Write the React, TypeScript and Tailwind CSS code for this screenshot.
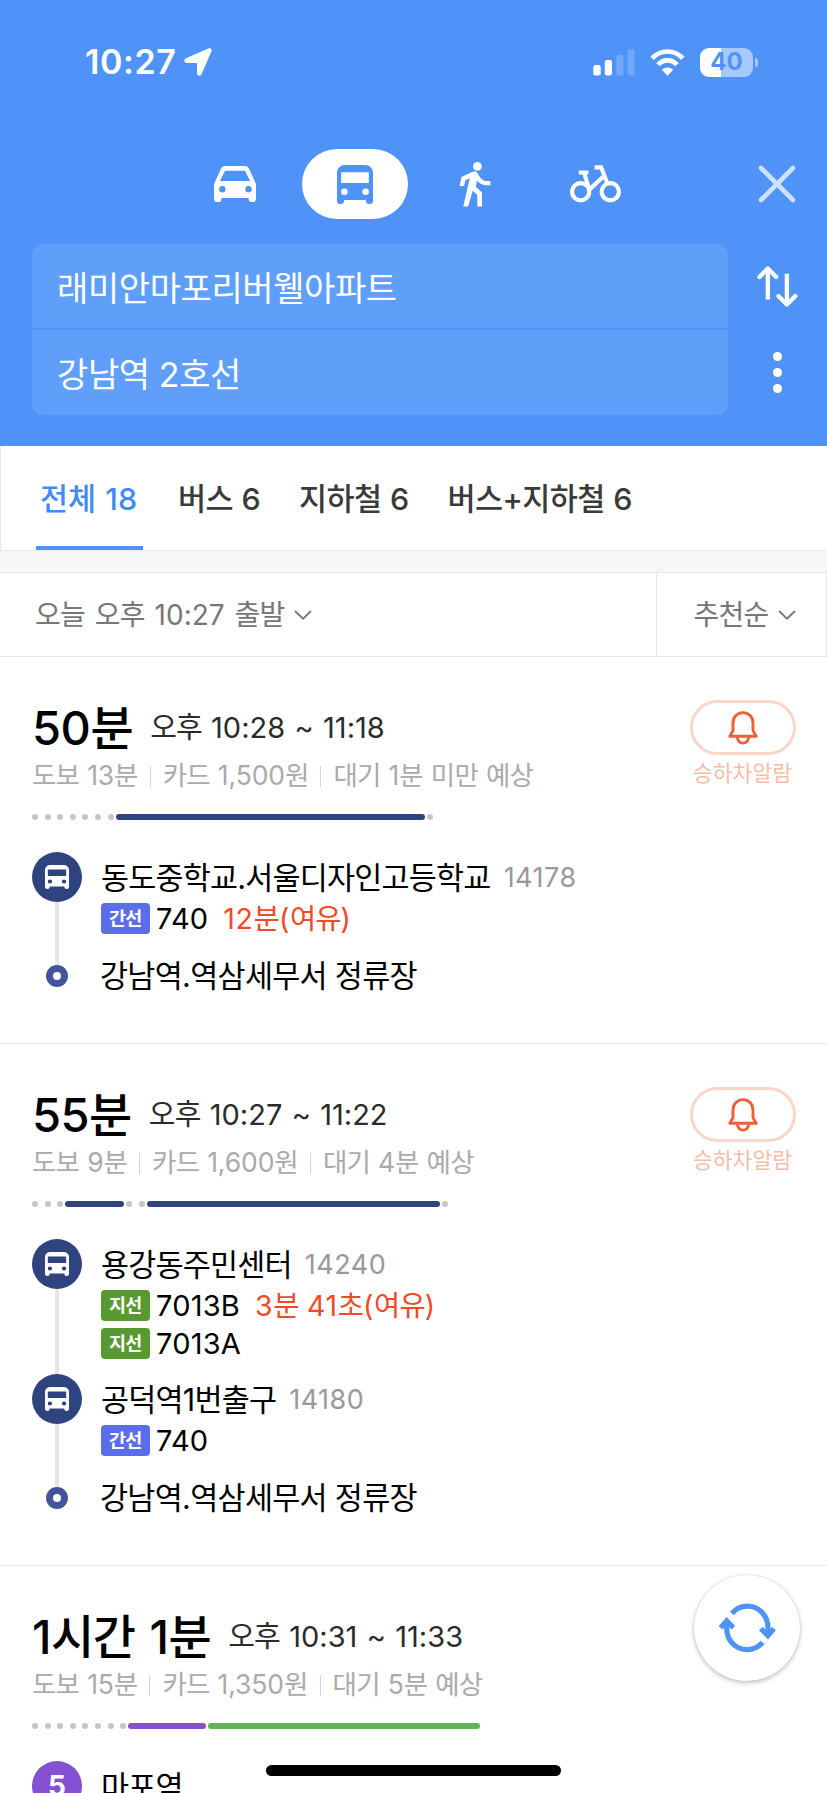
import clsx from "clsx";

type Tag = "간선" | "지선";

type BusLine = { tag: Tag; number: string; arrival?: string };

type Stop = {
    name: string;
    code?: string;
    subway?: string;
    lines: BusLine[];
};

// number = count of walking dots, object = ride segment
type Segment = number | { width: number; color: string };

type Route = {
    duration: string;
    time: string;
    meta: string[];
    segments: Segment[];
    stops: Stop[];
    goal?: string;
    alarm: boolean;
};

const NAVY = "bg-[#2f437f]";

const routes: Route[] = [
    {
        duration: "50분",
        time: "오후 10:28 ~ 11:18",
        meta: ["도보 13분", "카드 1,500원", "대기 1분 미만 예상"],
        segments: [7, { width: 309, color: NAVY }, 1],
        stops: [
            {
                name: "동도중학교.서울디자인고등학교",
                code: "14178",
                lines: [{ tag: "간선", number: "740", arrival: "12분(여유)" }],
            },
        ],
        goal: "강남역.역삼세무서 정류장",
        alarm: true,
    },
    {
        duration: "55분",
        time: "오후 10:27 ~ 11:22",
        meta: ["도보 9분", "카드 1,600원", "대기 4분 예상"],
        segments: [3, { width: 59, color: NAVY }, 2, { width: 293, color: NAVY }, 1],
        stops: [
            {
                name: "용강동주민센터",
                code: "14240",
                lines: [
                    { tag: "지선", number: "7013B", arrival: "3분 41초(여유)" },
                    { tag: "지선", number: "7013A" },
                ],
            },
            {
                name: "공덕역1번출구",
                code: "14180",
                lines: [{ tag: "간선", number: "740" }],
            },
        ],
        goal: "강남역.역삼세무서 정류장",
        alarm: true,
    },
    {
        duration: "1시간 1분",
        time: "오후 10:31 ~ 11:33",
        meta: ["도보 15분", "카드 1,350원", "대기 5분 예상"],
        segments: [8, { width: 78, color: "bg-[#8650d3]" }, { width: 272, color: "bg-[#60b157]" }],
        stops: [{ name: "마포역", subway: "5", lines: [] }],
        alarm: false,
    },
];

const tabs = [
    { label: "전체 18", active: true },
    { label: "버스 6", active: false },
    { label: "지하철 6", active: false },
    { label: "버스+지하철 6", active: false },
];

// Hangul is set tighter than digits, so the latin runs get their own tracking
function Mixed({ text, latin = "tracking-[0px]" }: { text: string; latin?: string }) {
    return (
        <span className="whitespace-pre">
            {text.split(/([\x20-\x7e]+)/).map((part, i) =>
                i % 2 ? (
                    <span key={i} className={latin}>
                        {part}
                    </span>
                ) : (
                    part
                ),
            )}
        </span>
    );
}

function BusIcon({ className }: { className?: string }) {
    return (
        <svg viewBox="0 0 36 39" preserveAspectRatio="none" className={className} fill="currentColor">
            <path
                fillRule="evenodd"
                d="M8 0H28C32.5 0 36 3.5 36 8V35.7A3.3 3.3 0 0 1 32.7 39H32.3A3.3 3.3 0 0 1 29 35.7V35H7V35.7A3.3 3.3 0 0 1 3.7 39H3.3A3.3 3.3 0 0 1 0 35.7V8C0 3.5 3.5 0 8 0ZM4.2 7.3V18H31.8V7.3ZM7.4 23.4A3.3 3.3 0 1 0 7.4 30 3.3 3.3 0 1 0 7.4 23.4ZM28.6 23.4A3.3 3.3 0 1 0 28.6 30 3.3 3.3 0 1 0 28.6 23.4Z"
            />
        </svg>
    );
}

function StatusBar() {
    return (
        <div className="flex h-[124px] items-center pl-[85px] pr-[69px] text-white">
            <span className="text-[34px] font-semibold leading-none tracking-[0.6px]">10:27</span>
            <svg className="ml-[8px] h-[28px] w-[28px]" viewBox="0 0 28 28" fill="currentColor">
                <path d="M24.3.5C26.8-.5 28.4 1.2 27.4 3.6L17.6 26C16.5 28.6 13 28 13 25.2V15.8C13 15.1 12.8 14.9 12.1 14.9H2.7C-.1 14.9-.6 11.3 2 10.2Z" />
            </svg>
            <svg className="ml-auto h-[27px] w-[42px]" viewBox="0 0 42 27" fill="currentColor">
                <rect x="0.3" y="16" width="7.4" height="10.5" rx="2.2" />
                <rect x="11.8" y="11" width="7.2" height="15.5" rx="2.2" />
                <rect x="23.2" y="5.8" width="7.2" height="20.7" rx="2.2" opacity="0.2" />
                <rect x="34.5" y="0.3" width="7" height="26.2" rx="2.2" opacity="0.2" />
            </svg>
            <svg className="ml-[15px] h-[27px] w-[35px]" viewBox="0 0 35 27" fill="none" stroke="currentColor" strokeWidth="4.7">
                <path d="M2.2 9.4A20.4 20.4 0 0 1 32.8 9.4" />
                <path d="M8 15.8A12.4 12.4 0 0 1 27 15.8" />
                <path d="M17.5 26.7 11.8 20.8A8.3 8.3 0 0 1 23.2 20.8Z" fill="currentColor" stroke="none" />
            </svg>
            <div className="ml-[15px] flex h-[29px] w-[53px] items-center justify-center rounded-[9px] bg-[linear-gradient(90deg,#fff_0_21px,#a6c9fb_21px)]">
                <span className="text-[24px] font-bold leading-none text-[#4f93f8]">40</span>
            </div>
            <div className="ml-[2px] h-[9px] w-[3px] rounded-r-full bg-[#a6c9fb]" />
        </div>
    );
}

function TransportBar() {
    return (
        <div className="mt-[25px] flex h-[70px] items-center pl-[175px] pr-[31px] text-white">
            <div className="flex w-[120px] justify-center">
                <svg className="h-[36px] w-[42px]" viewBox="0 0 42 36" fill="currentColor">
                    <path
                        fillRule="evenodd"
                        d="M11.2 0H30.8C32.8 0 34.2 1 35 2.8L41.3 16.4C41.8 17.4 42 18 42 19V32.4A3.6 3.6 0 0 1 38.4 36H38.1A3.6 3.6 0 0 1 34.5 32.4V32H7.5V32.4A3.6 3.6 0 0 1 3.9 36H3.6A3.6 3.6 0 0 1 0 32.4V19C0 18 .2 17.4.7 16.4L7 2.8C7.8 1 9.2 0 11.2 0ZM11 4.8 6 15.1H36L31 4.8ZM8.3 20.1A3.2 3.2 0 1 0 8.3 26.5 3.2 3.2 0 1 0 8.3 20.1ZM34.5 20.1A3.2 3.2 0 1 0 34.5 26.5 3.2 3.2 0 1 0 34.5 20.1Z"
                    />
                </svg>
            </div>
            <div className="flex w-[120px] justify-center">
                <div className="flex h-[70px] w-[106px] items-center justify-center rounded-full bg-white">
                    <BusIcon className="h-[39px] w-[36px] text-[#4f93f8]" />
                </div>
            </div>
            <div className="flex w-[120px] justify-center">
                <svg className="h-[45px] w-[32px]" viewBox="0 0 32 45" fill="currentColor">
                    <circle cx="18.4" cy="4.4" r="4.4" />
                    <path d="M.5 24 2.5 15 12.5 10.2C15 9 17.4 9.3 18.6 11.3L20 13.7C22 17 24.6 19.1 27.5 19.1H31.4V23.2H26.5C23.2 23.2 20 21.3 17.8 18.6L16.8 24.8 23 30.5V44.5H18.3V33L13.6 28.8 9.2 44.5H4.3L10.7 16.2 6.4 18.2 5 24Z" />
                </svg>
            </div>
            <div className="flex w-[120px] justify-center">
                <svg className="h-[38px] w-[51px]" viewBox="0 0 51 38" fill="none" stroke="currentColor" strokeWidth="4.1">
                    <circle cx="10.7" cy="26.7" r="8.6" />
                    <circle cx="40.3" cy="26.7" r="8.6" />
                    <path d="M8.8 7.5H18.4M14 7.5 19.4 24.5 33.5 11.5M24.5 2.4H31.2L37.6 19" />
                </svg>
            </div>
            <svg className="ml-auto h-[38px] w-[38px]" viewBox="0 0 38 38" fill="none" stroke="currentColor" strokeWidth="4.6" strokeLinecap="round" opacity="0.72">
                <path d="M3 3 35 35M35 3 3 35" />
            </svg>
        </div>
    );
}

function SearchBox() {
    return (
        <div className="mt-[25px] flex pl-[32px]">
            <div className="flex w-[696px] flex-col gap-[2px] overflow-hidden rounded-[11px] text-[34px] leading-[40px] tracking-[-0.4px] text-white">
                <div className="flex h-[84px] items-center bg-[#5f9ef9] pl-[25px] pt-[5px]">래미안마포리버웰아파트</div>
                <div className="flex h-[85px] items-center bg-[#5f9ef9] pl-[25px] pt-[5px]">강남역 2호선</div>
            </div>
            <div className="flex flex-1 flex-col items-center pt-[22px] text-white">
                <svg className="h-[41px] w-[41px]" viewBox="0 0 41 41" fill="none" stroke="currentColor" strokeWidth="4.3">
                    <path d="M10.8 33.5V3.5M29.9 7.7V37.5" />
                    <path d="M2.4 11 10.8 2.6 19.2 11M21.5 30 29.9 38.4 38.3 30" strokeLinecap="round" strokeLinejoin="round" />
                </svg>
                <div className="mt-[45px] flex flex-col gap-[7px]">
                    <span className="size-[9px] rounded-full bg-white" />
                    <span className="size-[9px] rounded-full bg-white" />
                    <span className="size-[9px] rounded-full bg-white" />
                </div>
            </div>
        </div>
    );
}

function Chevron() {
    return (
        <svg className="h-[10px] w-[18px]" viewBox="0 0 18 10" fill="none" stroke="#777" strokeWidth="1.8">
            <path d="M1 1 9 8.7 17 1" />
        </svg>
    );
}

function RouteBar({ segments }: { segments: Segment[] }) {
    return (
        <div className="mt-[17px] flex h-[6px] gap-[2px]">
            {segments.map((seg, i) =>
                typeof seg === "number" ? (
                    <div key={i} className="flex gap-[6.6px]">
                        {Array.from({ length: seg }, (_, d) => (
                            <span key={d} className="size-[6px] rounded-full bg-[#c6c6c6]" />
                        ))}
                    </div>
                ) : (
                    <div key={i} className={clsx("h-[6px] rounded-full", seg.color)} style={{ width: seg.width }} />
                ),
            )}
        </div>
    );
}

function StopRow({ stop }: { stop: Stop }) {
    return (
        <div className="flex min-h-[113px]">
            <div className="flex w-[50px] flex-col items-center">
                {stop.subway ? (
                    <div className="flex size-[50px] shrink-0 items-center justify-center rounded-full bg-[#8650d3] text-[28px] font-bold text-white">
                        {stop.subway}
                    </div>
                ) : (
                    <div className="flex size-[50px] shrink-0 items-center justify-center rounded-full bg-[#2f437f]">
                        <BusIcon className="h-[24px] w-[24px] text-white" />
                    </div>
                )}
                <div className="w-[4px] flex-1 bg-[#e6e6e6]" />
            </div>
            <div className="pb-[15px] pl-[19px]">
                <div className="flex h-[51px] items-center pt-px">
                    <span className="text-[30.5px] tracking-[-0.8px] text-black">{stop.name}</span>
                    {stop.code && <span className="ml-[13px] text-[27px] tracking-[0.5px] text-[#999]">{stop.code}</span>}
                </div>
                <div className="flex flex-col gap-[7px]">
                    {stop.lines.map((line) => (
                        <div key={line.number} className="flex h-[31px] items-center">
                            <span
                                className={clsx(
                                    "flex h-[31px] w-[48.5px] items-center justify-center rounded-[4px] text-[18.5px] font-bold leading-none tracking-[-0.8px] text-white",
                                    line.tag === "간선" ? "bg-[#5b6eea]" : "bg-[#589a31]",
                                )}
                            >
                                {line.tag}
                            </span>
                            <span className="ml-[6.5px] pt-px text-[29px] tracking-[0.2px] text-black">{line.number}</span>
                            {line.arrival && (
                                <span className="ml-[15px] pt-px text-[28.5px] tracking-[-0.9px] text-[#f04a29]">
                                    <Mixed text={line.arrival} latin="tracking-[0.6px]" />
                                </span>
                            )}
                        </div>
                    ))}
                </div>
            </div>
        </div>
    );
}

function RouteCard({ route }: { route: Route }) {
    return (
        <section className="border-b border-[#ececec] pb-[56px] pl-[32px] pr-[31px]">
            <div className="flex justify-between">
                <div className="pt-[44px]">
                    <div className="flex h-[52px] items-center pt-[2px]">
                        <span className="text-[47px] font-medium tracking-[-1.5px] text-black [word-spacing:3px]">
                            <Mixed text={route.duration} latin="tracking-[-0.5px]" />
                        </span>
                        <span className="ml-[18px] text-[29px] tracking-[-0.9px] text-[#2b2b2b] [word-spacing:1.2px]">
                            <Mixed text={route.time} />
                        </span>
                    </div>
                    <div className="flex h-[44px] items-center pt-[2px] text-[26.5px] tracking-[-0.8px] text-[#aaa] [word-spacing:0.6px]">
                        {route.meta.map((item, i) => (
                            <span key={item} className="flex items-center">
                                {i > 0 && <i className="mx-[12px] h-[21px] w-px bg-[#d4d4d4]" />}
                                <Mixed text={item} latin="tracking-[-0.1px]" />
                            </span>
                        ))}
                    </div>
                </div>
                {route.alarm && (
                    <div className="flex w-[106px] flex-col items-center pt-[43px]">
                        <div className="flex h-[55px] w-[106px] items-center justify-center rounded-full border-[3px] border-[#fad6c9]">
                            <svg className="h-[34px] w-[30px]" viewBox="0 0 30 34" fill="none" stroke="#ee6037" strokeWidth="2.9" strokeLinejoin="round">
                                <path d="M1.8 25.3 5 19.6V11.9C5 6 9.4 1.6 15 1.6S25 6 25 11.9V19.6L28.2 25.3Z" />
                                <path d="M9.4 26.5A5.6 5.6 0 0 0 20.6 26.5" />
                            </svg>
                        </div>
                        <span className="mt-[3px] whitespace-nowrap pr-px text-[21.5px] leading-[30px] text-[#f5bda9]">승하차알람</span>
                    </div>
                )}
            </div>
            <RouteBar segments={route.segments} />
            <div className="mt-[32px]">
                {route.stops.map((stop) => (
                    <StopRow key={stop.name} stop={stop} />
                ))}
                {route.goal && (
                    <div className="flex h-[22px] items-center">
                        <div className="flex w-[50px] justify-center">
                            <div className="size-[22px] rounded-full border-[7px] border-[#44549b] bg-white" />
                        </div>
                        <span className="pl-[18px] text-[30.5px] tracking-[-0.7px] text-black">{route.goal}</span>
                    </div>
                )}
            </div>
        </section>
    );
}

export default function App() {
    return (
        <div className="relative h-[1793px] w-[827px] overflow-hidden whitespace-nowrap bg-white font-['Inter','Noto_Sans_CJK_KR',sans-serif]">
            <header className="h-[446px] bg-[#4f93f8]">
                <StatusBar />
                <TransportBar />
                <SearchBox />
            </header>

            {/* Route type tabs */}
            <nav className="flex h-[105px] gap-[31px] border-b border-l border-[#e8eaea] pl-[35px]">
                {tabs.map((tab) => (
                    <div
                        key={tab.label}
                        className={clsx(
                            "flex items-center border-b-4 px-[4px] pt-[6px] text-[30.5px] font-medium [word-spacing:1px]",
                            tab.active
                                ? "w-[107px] border-[#4f93f8] tracking-[0px] text-[#3f8af7]"
                                : "border-transparent tracking-[-0.6px] text-[#3a3a3a]",
                        )}
                    >
                        {tab.label}
                    </div>
                ))}
            </nav>
            <div className="h-[21px] bg-[#f5f7f7]" />

            {/* Departure time / sort order */}
            <div className="flex h-[85px] border-y border-r border-[#e6e8e8] text-[28px] tracking-[-0.8px] text-[#777]">
                <div className="flex flex-1 items-center gap-[10px] pl-[35px] [word-spacing:2px]">
                    <Mixed text="오늘 오후 10:27 출발" />
                    <Chevron />
                </div>
                <div className="flex w-[170px] items-center gap-[10px] border-l border-[#e6e8e8] pl-[36.5px]">
                    추천순
                    <Chevron />
                </div>
            </div>

            <main>
                {routes.map((route) => (
                    <RouteCard key={route.duration} route={route} />
                ))}
            </main>

            {/* Floating refresh button */}
            <button className="absolute left-[694px] top-[1575px] flex size-[106px] items-center justify-center rounded-full bg-white pl-px shadow-[0_2px_5px_rgba(0,0,0,0.22),0_0_2px_rgba(0,0,0,0.18)]">
                <svg className="h-[50px] w-[57px]" viewBox="0 0 57 50" fill="none" stroke="#4f93f8" strokeWidth="5.2">
                    <path d="M13 10.5C17 5.8 22 3.2 28.2 3.2 40 3.2 48.9 12.5 48.9 24.6V31M43.6 39.5C39.5 44.2 34.4 46.6 28.2 46.6 16.5 46.6 7.7 37.3 7.7 25.2V19" />
                    <path d="M41.8 25.6 48.9 32.7 55 25.6M1.6 24.8 7.7 17.9 14.4 24.8" />
                </svg>
            </button>

            {/* Home indicator */}
            <div className="absolute left-[266px] top-[1765px] h-[11px] w-[295px] rounded-full bg-black" />
        </div>
    );
}
